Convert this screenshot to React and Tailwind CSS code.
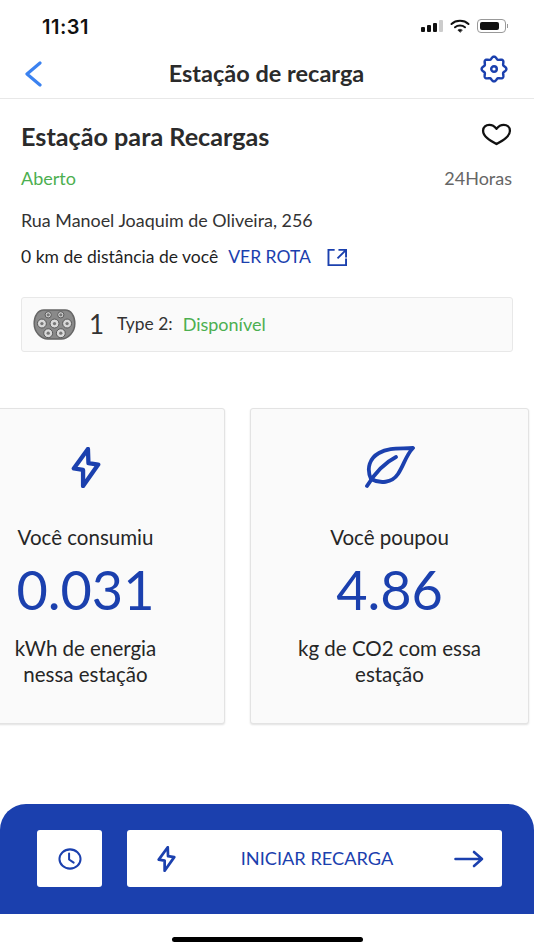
import React from "react";

const Bolt = ({ className }) => (
  <svg viewBox="0 0 30 42" className={className} fill="none" stroke="currentColor" strokeWidth="4.4" strokeLinejoin="round" strokeLinecap="round">
    <path d="M17 2 L2.5 22 L12 23.5 L12 40 L27.5 18 L17.5 16.5 Z" />
  </svg>
);

const Leaf = () => (
  <svg viewBox="0 0 50 42" className="w-[50px] h-[42px] text-[#1b40ae]" fill="none" stroke="currentColor" strokeWidth="3.8" strokeLinecap="round" strokeLinejoin="round">
    <path d="M48 2 C36 3 24 1 14 7 C5 12 1 22 6 33 C15 38 27 37 33 28 C39 19 41 9 48 2 Z" />
    <path d="M2 40 C10 27 19 17 31 11" />
  </svg>
);

// flor de 8 petalas
const gearPath = (() => {
  const pts = [];
  for (let i = 0; i < 96; i++) {
    const t = (i / 96) * Math.PI * 2;
    const r = 12 + 1.3 * Math.cos(8 * t);
    pts.push(`${(15 + r * Math.sin(t)).toFixed(2)} ${(15 - r * Math.cos(t)).toFixed(2)}`);
  }
  return "M" + pts.join(" L") + " Z";
})();

const Gear = () => (
  <svg viewBox="0 0 30 30" className="w-[30px] h-[28px] text-[#1b40ae]" fill="none" stroke="currentColor" strokeWidth="2.6" strokeLinejoin="round">
    <path d={gearPath} />
    <circle cx="15" cy="15" r="3" />
  </svg>
);

// conector Type 2
const Connector = () => (
  <svg viewBox="0 0 44 32" className="w-[43px] h-[31px] shrink-0">
    <path d="M11 1 H33 C39 1 43 7 43 15 C43 24 36 31 29 31 H15 C8 31 1 24 1 15 C1 7 5 1 11 1 Z" fill="#8a8a8a" stroke="#666" strokeWidth="1.5" />
    {[[15.5, 6], [28.5, 6], [9, 15], [22, 15], [35, 15], [15.5, 25], [28.5, 25]].map(([cx, cy], i) => (
      <g key={i}>
        <circle cx={cx} cy={cy} r={i < 2 ? 3.2 : 4.6} fill="#d9d9d9" stroke="#555" strokeWidth="1" />
        <circle cx={cx} cy={cy} r="1.7" fill="#777" />
      </g>
    ))}
  </svg>
);

const StatCard = ({ icon, label, value, children }) => (
  <div className="w-[279px] h-[316px] shrink-0 flex flex-col items-center bg-[#fafafa] rounded-[3px] border border-[#e3e3e3] shadow-[0_1px_2px_rgba(0,0,0,0.12)]">
    <div className="h-[42px] mt-[37px] flex items-center justify-center">{icon}</div>
    <p className="mt-[37px] text-[20.5px] leading-[24px] text-[#262626]">{label}</p>
    <p className="mt-[12px] text-[54px] leading-[58px] text-[#1b40ae]">{value}</p>
    <p className="mt-[16px] text-[20.5px] leading-[26px] text-[#262626] text-center">{children}</p>
  </div>
);

export default function App() {
  return (
    <div className="w-[534px] h-[950px] bg-white flex flex-col overflow-hidden font-['Lato','Open_Sans',sans-serif]">
      {/* status bar */}
      <div className="h-[50px] pl-[42px] pr-[26px] flex items-center justify-between">
        <span className="text-[20px] font-semibold tracking-[0.5px] text-[#111] font-['Inter',sans-serif] mt-[3px]">11:31</span>
        <div className="flex items-center gap-[7px] mt-[1px]">
          <div className="flex items-end gap-[2px]">
            <span className="w-[4px] h-[5px] rounded-[1px] bg-[#111]" />
            <span className="w-[4px] h-[7px] rounded-[1px] bg-[#111]" />
            <span className="w-[4px] h-[9px] rounded-[1px] bg-[#111]" />
            <span className="w-[4px] h-[12px] rounded-[1px] bg-[#ccc]" />
          </div>
          <svg viewBox="0 0 20 14" className="w-[20px] h-[14px]" fill="none" stroke="#111" strokeWidth="2" strokeLinecap="round">
            <path d="M1.5 5 C6 0.8 14 0.8 18.5 5" />
            <path d="M5 8.3 C7.8 6 12.2 6 15 8.3" />
            <path d="M10 13.2 L7.8 11 C9 10 11 10 12.2 11 Z" fill="#111" strokeWidth="0.5" />
          </svg>
          <div className="flex items-center gap-[1px]">
            <div className="w-[29px] h-[14px] rounded-[4px] border border-[#999] p-[2px]">
              <div className="w-[19px] h-full rounded-[2px] bg-[#111]" />
            </div>
            <span className="w-[1.5px] h-[4px] bg-[#999]" />
          </div>
        </div>
      </div>

      {/* nav */}
      <div className="h-[49px] grid grid-cols-[1fr_auto_1fr] items-center pl-[24px] pr-[25px] border-b border-[#e8e8e8]">
        <svg viewBox="0 0 18 26" className="w-[18px] h-[26px] text-[#3b82f0]" fill="none" stroke="currentColor" strokeWidth="3.2" strokeLinecap="round" strokeLinejoin="round">
          <path d="M16 2 L3 13 L16 24" />
        </svg>
        <span className="text-[23.5px] font-bold text-[#2b2b2b]">Estação de recarga</span>
        <div className="justify-self-end -mt-[10px]"><Gear /></div>
      </div>

      {/* station info */}
      <div className="px-[21px] pt-[22px]">
        <div className="flex items-center justify-between h-[32px]">
          <h1 className="text-[25.2px] font-bold text-[#2b2b2b]">Estação para Recargas</h1>
          <svg viewBox="0 0 32 24" className="w-[31px] h-[23px] -mt-[6px] mr-[1px]" fill="none" stroke="#111" strokeWidth="2.4" strokeLinejoin="round">
            <path d="M16 22 C9 18 2 14 2 8 C2 4 5 2 8.5 2 C11.5 2 14 3.5 16 6 C18 3.5 20.5 2 23.5 2 C27 2 30 4 30 8 C30 14 23 18 16 22 Z" />
          </svg>
        </div>
        <div className="mt-[15px] flex items-center justify-between text-[18px] leading-[20px]">
          <span className="text-[#4caf50]">Aberto</span>
          <span className="text-[#666] mr-[1px]">24Horas</span>
        </div>
        <p className="mt-[21px] text-[17.9px] leading-[22px] text-[#333]">Rua Manoel Joaquim de Oliveira, 256</p>
        <div className="mt-[15px] flex items-center h-[22px] text-[17.5px]">
          <span className="text-[#1f1f1f]">0 km de distância de você</span>
          <span className="ml-[10px] text-[#1b40ae]">VER ROTA</span>
          <svg viewBox="0 0 22 20" className="ml-[16px] w-[21px] h-[19px] text-[#1b40ae]" fill="none" stroke="currentColor" strokeWidth="2">
            <path d="M8 2 H1.5 V18 H20 V11" />
            <path d="M12 2 H20 V10 M20 2 L11 11" />
          </svg>
        </div>
        <div className="mt-[29px] h-[55px] flex items-center pl-[11px] bg-[#fafafa] border border-[#e8e8e8] rounded-[3px]">
          <Connector />
          <span className="ml-[13px] text-[26px] text-[#333]">1</span>
          <span className="ml-[13px] text-[17.4px] text-[#333]">Type 2:</span>
          <span className="ml-[10px] text-[18px] text-[#4caf50]">Disponível</span>
        </div>
      </div>

      {/* cards */}
      <div className="mt-[56px] flex gap-[25px] -ml-[54px]">
        <StatCard icon={<Bolt className="w-[30px] h-[41px] text-[#1b40ae]" />} label="Você consumiu" value="0.031">
          kWh de energia<br />nessa estação
        </StatCard>
        <StatCard icon={<Leaf />} label="Você poupou" value="4.86">
          kg de CO2 com essa<br />estação
        </StatCard>
      </div>

      {/* bottom bar */}
      <div className="mt-[80px] h-[110px] bg-[#1b40ae] rounded-t-[26px] flex gap-[25px] pl-[37px] pr-[32px] pt-[26px]">
        <div className="w-[65px] h-[57px] bg-white rounded-[3px] flex items-center justify-center">
          <svg viewBox="0 0 26 24" className="w-[26px] h-[22px] text-[#1b40ae]" fill="none" stroke="currentColor" strokeWidth="2.2" strokeLinecap="round" strokeLinejoin="round">
            <ellipse cx="13" cy="12" rx="11.5" ry="10.5" />
            <path d="M12 6 V12.5 L17 16" />
          </svg>
        </div>
        <div className="flex-1 h-[57px] bg-white rounded-[3px] flex items-center justify-between pl-[30px] pr-[18px]">
          <Bolt className="w-[19px] h-[26px] text-[#1b40ae]" />
          <span className="text-[18.2px] text-[#1b40ae] ml-[4px]">INICIAR RECARGA</span>
          <svg viewBox="0 0 30 18" className="w-[30px] h-[18px] text-[#1b40ae]" fill="none" stroke="currentColor" strokeWidth="2.6" strokeLinecap="round" strokeLinejoin="round">
            <path d="M1.5 9 H28 M20 2 L28 9 L20 16" />
          </svg>
        </div>
      </div>

      {/* home indicator */}
      <div className="flex-1 flex justify-center pt-[23px]">
        <div className="w-[191px] h-[5px] rounded-full bg-black" />
      </div>
    </div>
  );
}
